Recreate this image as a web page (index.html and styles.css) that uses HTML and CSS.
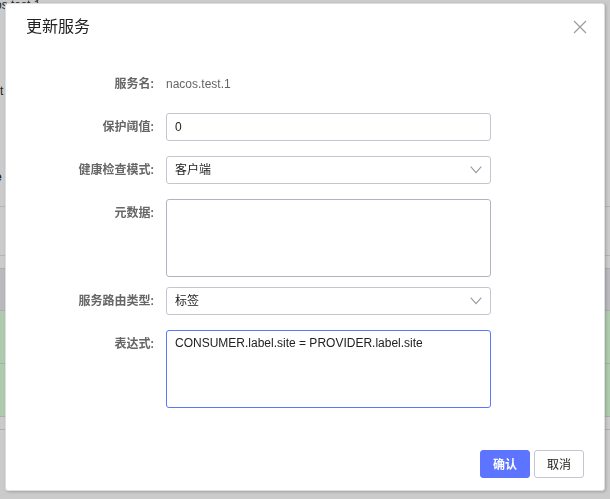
FILE: index.html
```html
<!DOCTYPE html>
<html lang="zh-CN">
<head>
    <meta charset="UTF-8">
    <title>更新服务</title>
    <link rel="stylesheet" href="styles.css">
</head>
<body>

<!-- Service detail page behind the dialog -->
<div class="page">
    <div class="page-row name">os.test.1</div>
    <div class="page-row">t</div>
    <div class="page-row last">e</div>
    <div class="cluster-head"></div>
    <div class="table-head"></div>
    <div class="table-row"></div>
    <div class="table-row"></div>
    <div class="cluster-foot"></div>
</div>

<div class="overlay">
    <form class="dialog" role="dialog" aria-labelledby="dialogTitle">
        <div class="dialog-header">
            <h2 id="dialogTitle">更新服务</h2>
            <button type="button" class="close-btn" aria-label="关闭">
                <svg width="14" height="14" viewBox="0 0 14 14" fill="none" stroke="#999" stroke-width="1.1">
                    <path d="M1 1l12 12M13 1L1 13"/>
                </svg>
            </button>
        </div>

        <div class="dialog-body">
            <div class="form-item">
                <span class="label">服务名:</span>
                <span class="text">nacos.test.1</span>
            </div>
            <div class="form-item">
                <label class="label" for="threshold">保护阈值:</label>
                <input class="control" type="text" id="threshold" value="0">
            </div>
            <div class="form-item">
                <label class="label" for="checkMode">健康检查模式:</label>
                <div class="select-box">
                    <select class="control" id="checkMode">
                        <option>客户端</option>
                    </select>
                    <svg class="arrow" width="12" height="8" viewBox="0 0 12 8" fill="none" stroke="#999" stroke-width="1.1">
                        <path d="M.7 .7L6 6.6 11.3 .7"/>
                    </svg>
                </div>
            </div>
            <div class="form-item area">
                <label class="label" for="metadata">元数据:</label>
                <textarea class="control" id="metadata"></textarea>
            </div>
            <div class="form-item">
                <label class="label" for="routeType">服务路由类型:</label>
                <div class="select-box">
                    <select class="control" id="routeType">
                        <option>标签</option>
                    </select>
                    <svg class="arrow" width="12" height="8" viewBox="0 0 12 8" fill="none" stroke="#999" stroke-width="1.1">
                        <path d="M.7 .7L6 6.6 11.3 .7"/>
                    </svg>
                </div>
            </div>
            <div class="form-item area">
                <label class="label" for="expression">表达式:</label>
                <textarea class="control active" id="expression" spellcheck="false">CONSUMER.label.site = PROVIDER.label.site</textarea>
            </div>
        </div>

        <div class="dialog-footer">
            <button type="button" class="btn primary">确认</button>
            <button type="button" class="btn">取消</button>
        </div>
    </form>
</div>

</body>
</html>
```

FILE: styles.css
```css
* {
    box-sizing: border-box;
}

body {
    margin: 0;
    height: 100vh;
    overflow: hidden;
    background: #cbcbcb;
    font-family: "Liberation Sans", "Noto Sans CJK SC", sans-serif;
    font-size: 12px;
    color: #222;
}

/* page behind */
.page {
    display: flow-root;
}

.page-row {
    height: 86px;
    line-height: 10px;
}

.page-row.name {
    margin-left: -5px;
}

.page-row.last {
    height: 34px;
    margin-left: -5px;
    font-weight: bold;
}

.cluster-head {
    height: 50px;
    border-top: 1px solid #b4b4b6;
    border-bottom: 1px solid #b4b4b6;
}

.table-head {
    height: 43px;
    margin-top: 12px;
    background: #b9b9be;
    border-top: 1px solid #adadb0;
    border-bottom: 1px solid #adadb0;
}

.table-row {
    height: 53px;
    background: #afcbae;
    border-bottom: 1px solid #a9b0aa;
}

.cluster-foot {
    height: 13px;
    border-bottom: 1px solid #b0b0b2;
}

/* dialog */
.overlay {
    position: fixed;
    inset: 0;
    padding: 3px 5px;
}

.dialog {
    background: #fff;
    border: 1px solid #dcdee3;
    border-radius: 3px;
    box-shadow: 1px 1px 3px rgba(0, 0, 0, 0.2);
}

.dialog-header {
    display: flex;
    justify-content: space-between;
    align-items: center;
    height: 46px;
    padding: 0 17px 0 20px;
}

.dialog-header h2 {
    margin: 0;
    font-size: 16px;
    font-weight: normal;
    line-height: 24px;
}

.close-btn {
    padding: 0;
    border: none;
    background: none;
    line-height: 0;
    cursor: pointer;
}

.dialog-body {
    padding: 20px 113px 42px 20px;
}

.form-item {
    display: grid;
    grid-template-columns: 128px 1fr;
    column-gap: 12px;
    margin-bottom: 15px;
}

.form-item.area {
    margin-bottom: 10px;
}

.form-item.area:last-child {
    margin-bottom: 0;
}

.label {
    text-align: right;
    line-height: 28px;
    font-family: Roboto, "Noto Sans CJK SC", sans-serif;
    font-weight: bold;
    color: #666;
}

.text {
    line-height: 28px;
    color: #666;
}

.control {
    display: block;
    width: 100%;
    height: 28px;
    margin: 0;
    padding: 0 8px;
    border: 1px solid #c4c6cf;
    border-radius: 3px;
    outline: none;
    background: #fff;
    color: #222;
    font: inherit;
}

select.control {
    appearance: none;
}

textarea.control {
    height: 78px;
    padding: 4px 8px;
    border-color: #b3b2c0;
    line-height: 16px;
    resize: none;
}

textarea.control.active {
    border-color: #5a78fb;
}

.select-box {
    position: relative;
}

.arrow {
    position: absolute;
    top: 10px;
    right: 9px;
    pointer-events: none;
}

.dialog-footer {
    display: flex;
    justify-content: flex-end;
    gap: 4px;
    padding: 0 20px 12px;
}

.btn {
    width: 50px;
    height: 28px;
    padding: 0 0 2px;
    border: 1px solid #c4c6cf;
    border-radius: 3px;
    background: #fff;
    color: #222;
    font: inherit;
    cursor: pointer;
}

.btn.primary {
    border-color: #5c74ff;
    background: #5c74ff;
    color: #fff;
    font-weight: bold;
}
```
